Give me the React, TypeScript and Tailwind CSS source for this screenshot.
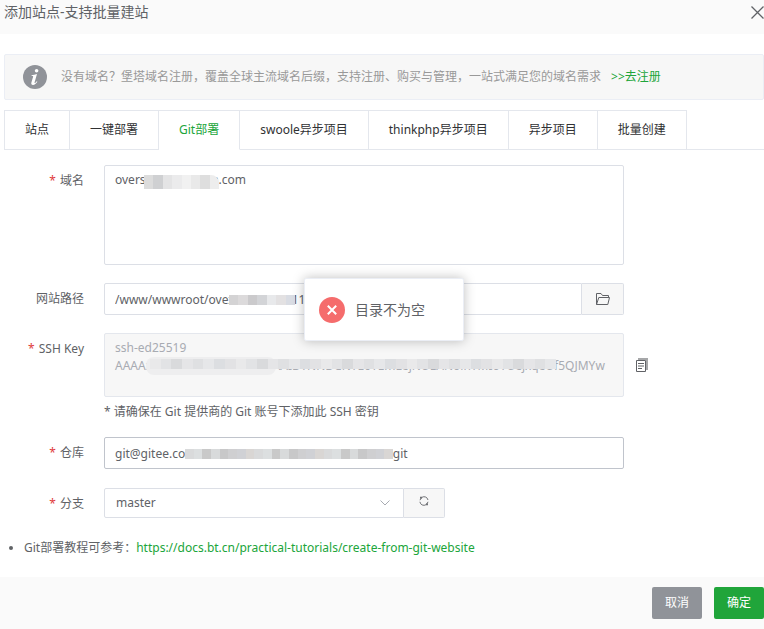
import React, { useState } from 'react';

const TABS = ['站点', '一键部署', 'Git部署', 'swoole异步项目', 'thinkphp异步项目', '异步项目', '批量创建'];

const inputBase =
  'block w-full rounded-xs border border-[#dcdfe6] bg-white px-2.5 text-xs text-[#606266] outline-none focus:border-[#20a53a]';

// Shades of the mosaic that hides private values
const DOMAIN_MASK = ['bg-[#dcdcdc]', 'bg-[#cfd0d2]', 'bg-[#e4e4e5]', 'bg-[#ebebec]', 'bg-[#f1f1f1]', 'bg-[#e9e9e9]', 'bg-[#dedede]', 'bg-[#ededed]'];
const PATH_MASK = ['bg-[#d4d3d4]', 'bg-[#dcdadb]', 'bg-[#cbcacc]', 'bg-[#d3d4d7]', 'bg-[#e8e9eb]', 'bg-[#e3e1e2]', 'bg-[#d9dce3]'];
const KEY_MASK = ['bg-[#e9e9ea]', 'bg-[#e2e3e5]', 'bg-[#d9dadc]', 'bg-[#e5e5e7]', 'bg-[#dfe0e2]', 'bg-[#e6e7e9]', 'bg-[#dcdee1]', 'bg-[#e2e2e4]'];
const REPO_MASK = ['bg-[#d9dadb]', 'bg-[#dcdfe0]', 'bg-[#c9c9c9]', 'bg-[#d8dadb]', 'bg-[#c8c8c9]', 'bg-[#cfcfd1]', 'bg-[#d0d1d5]', 'bg-[#d9d6d4]'];

const Mask: React.FC<{ cells: string[]; className: string }> = ({ cells, className }) => (
  <div aria-hidden="true" className={`absolute flex overflow-hidden ${className}`}>
    {cells.map((cell, i) => (
      <span key={i} className={`flex-1 ${cell}`} />
    ))}
  </div>
);

const FormRow: React.FC<{
  id: string;
  label: string;
  required?: boolean;
  children: React.ReactNode;
}> = ({ id, label, required, children }) => (
  <div className="flex gap-5">
    <label htmlFor={id} className="w-20 shrink-0 text-right leading-8">
      {required && <span className="mr-1 text-[#e03c3c]">*</span>}
      {label}
    </label>
    {children}
  </div>
);

const InfoIcon = () => (
  <svg viewBox="0 0 24 24" className="size-6 shrink-0">
    <circle cx="12" cy="12" r="12" fill="#909399" />
    <circle cx="13.6" cy="5.8" r="1.8" fill="#fff" />
    <path d="M8.6 10.2c1.8-.2 3.4-.7 5.4-1.3l-2.4 8.3c-.2.8.1 1 .6.7.5-.3 1-.9 1.5-1.6l.7.5c-1.3 2-2.8 3.2-4.4 3.2-1.5 0-2-1-1.6-2.5l1.7-5.7c.2-.7 0-.9-.6-.9h-1z" fill="#fff" />
  </svg>
);

const FolderIcon = () => (
  <svg viewBox="0 0 14 12" className="h-3 w-3.5" fill="none" stroke="#606266">
    <path d="M.5 11.5V.5h4.5l1.5 2h6v2M.5 11.5l2.3-7h10.7l-1.7 7z" />
  </svg>
);

const CopyIcon = () => (
  <svg viewBox="0 0 12 14" className="h-3.5 w-3" fill="none">
    <path d="M2 1h9v11" stroke="#a6a7a9" strokeWidth="2" />
    <path d="M.5 2.5h9v11h-9z" fill="#fff" stroke="#606266" />
    <path d="M2 5.5h6M2 8h6M2 10.5h4" stroke="#606266" />
  </svg>
);

const RefreshIcon = () => (
  <svg viewBox="0 0 10 10" className="size-2.5" fill="none" stroke="#707276">
    <path d="M3 1.3A4 4 0 0 1 9 4M.9 5.8A4 4 0 0 0 7 8.7M1 4.2l.8-1.7M9 5.8l-.8 1.7" />
    <path d="M1 .8h2v2H1zM7 7.2h2v2H7z" fill="#707276" stroke="none" />
  </svg>
);

const App: React.FC = () => {
  const [activeTab, setActiveTab] = useState('Git部署');
  const [domain, setDomain] = useState('oversxxxxxxx11nn.com');
  const [path, setPath] = useState('/www/wwwroot/ovexxxxxxxxxx11nn.com');
  const [repo, setRepo] = useState('git@gitee.connnnnnnnnnnnnnnnnnnnnnnnnnnngit');
  const sshKey = 'ssh-ed25519\nAAAAxxxxxxxxxxxxxxxxxxxxAAIDTNNDCNTE0TEmLejNUEANoinTMIoTUejxqeUf5QJMYw';

  return (
    <div className="relative bg-white font-['Noto_Sans','Noto_Sans_CJK_SC',sans-serif] text-xs text-[#606266]">
      <header className="flex h-[34px] items-start justify-between bg-[#fafafa] pl-1">
        <h1 className="text-sm leading-6">添加站点-支持批量建站</h1>
        <button type="button" aria-label="关闭" className="py-1.5">
          <svg viewBox="0 0 13 13" className="size-[13px]" fill="none" stroke="#606266" strokeWidth="1.3">
            <path d="M.5.5l12 12M12.5.5l-12 12" />
          </svg>
        </button>
      </header>

      <main className="pt-5 pl-1">
        <div className="flex h-[46px] items-center rounded-xs border border-[#ebeef5] bg-[#f7f7f7] pl-[18px] text-[#999]">
          <InfoIcon />
          <p className="ml-3.5">没有域名？堡塔域名注册，覆盖全球主流域名后缀，支持注册、购买与管理，一站式满足您的域名需求</p>
          <a href="#register" className="ml-2.5 text-[#20a53a]">&gt;&gt;去注册</a>
        </div>

        <div role="tablist" className="mt-2.5 flex h-10">
          {TABS.map((tab, i) => (
            <button
              key={tab}
              type="button"
              role="tab"
              aria-selected={activeTab === tab}
              onClick={() => setActiveTab(tab)}
              className={`shrink-0 border-y border-r border-[#e4e7ed] px-5 ${i === 0 ? 'border-l' : ''} ${
                activeTab === tab ? 'border-b-white text-[#20a53a]' : 'text-[#303133]'
              }`}
            >
              {tab}
            </button>
          ))}
          <div className="flex-1 border-b border-[#e4e7ed]" />
        </div>

        <form className="pt-[15px]" onSubmit={e => e.preventDefault()}>
          <FormRow id="domain" label="域名" required>
            <div className="relative w-full max-w-[520px]">
              <textarea
                id="domain"
                value={domain}
                onChange={e => setDomain(e.target.value)}
                className={`${inputBase} h-[100px] resize-none py-[5px] leading-[18px]`}
              />
              <Mask cells={DOMAIN_MASK} className="top-2.5 left-10 h-3.5 w-[75px] rounded-tr-lg" />
            </div>
          </FormRow>

          <div className="mt-[18px]">
            <FormRow id="path" label="网站路径">
              <div className="relative flex w-full max-w-[520px]">
                <input
                  id="path"
                  value={path}
                  onChange={e => setPath(e.target.value)}
                  className={`${inputBase} h-8 rounded-r-none`}
                />
                <Mask cells={PATH_MASK} className="top-3 left-[125px] h-2.5 w-[66px]" />
                <button
                  type="button"
                  aria-label="选择目录"
                  className="flex h-8 w-[42px] shrink-0 items-center justify-center rounded-r-xs border border-l-0 border-[#dcdfe6] bg-[#f7f7f7]"
                >
                  <FolderIcon />
                </button>
              </div>
            </FormRow>
          </div>

          <div className="mt-[18px]">
            <FormRow id="ssh-key" label="SSH Key" required>
              <div className="w-full max-w-[520px]">
                <div className="relative">
                  <textarea
                    id="ssh-key"
                    readOnly
                    value={sshKey}
                    className="block h-16 w-full resize-none overflow-hidden rounded-xs border border-[#e4e7ed] bg-[#f7f7f7] px-2.5 py-[5px] text-xs leading-[18px] text-[#a8abb2] outline-none"
                  />
                  <div aria-hidden="true" className="absolute top-6 left-[42px] h-[18px] w-[130px] rounded-lg bg-[#eeeeef]" />
                  <Mask cells={[...KEY_MASK, ...KEY_MASK, ...KEY_MASK, ...KEY_MASK, ...KEY_MASK.slice(0, 6)]} className="top-[26px] left-[46px] h-2.5 w-[406px]" />
                </div>
                <p className="mt-1.5 leading-[18px]">* 请确保在 Git 提供商的 Git 账号下添加此 SSH 密钥</p>
              </div>
              <button type="button" aria-label="复制" className="-ml-2 flex h-16 items-center">
                <CopyIcon />
              </button>
            </FormRow>
          </div>

          <div className="mt-4">
            <FormRow id="repo" label="仓库" required>
              <div className="relative w-full max-w-[520px]">
                <input
                  id="repo"
                  value={repo}
                  onChange={e => setRepo(e.target.value)}
                  className="block h-8 w-full rounded-xs border border-[#c0c4cc] bg-white px-2.5 text-xs text-[#606266] outline-none focus:border-[#20a53a]"
                />
                <Mask cells={[...REPO_MASK, ...REPO_MASK, ...REPO_MASK]} className="top-3 left-[81px] h-2.5 w-52" />
              </div>
            </FormRow>
          </div>

          <div className="mt-[19px]">
            <FormRow id="branch" label="分支" required>
              <div className="flex h-[30px] w-[341px]">
                <div className="relative flex-1">
                  <select
                    id="branch"
                    className="block h-full w-full appearance-none rounded-l-xs border border-[#dcdfe6] bg-white px-[11px] text-xs text-[#606266] outline-none"
                  >
                    <option>master</option>
                  </select>
                  <svg viewBox="0 0 10 6" className="pointer-events-none absolute top-3 right-3.5 h-1.5 w-2.5" fill="none" stroke="#a8abb2">
                    <path d="M.5.5L5 5 9.5.5" />
                  </svg>
                </div>
                <button
                  type="button"
                  aria-label="刷新"
                  className="flex w-[41px] items-center justify-center rounded-r-xs border border-l-0 border-[#dcdfe6] bg-[#f7f7f7] pb-1"
                >
                  <RefreshIcon />
                </button>
              </div>
            </FormRow>
          </div>
        </form>

        <ul className="mt-[19px] list-disc pb-5 pl-5 leading-[18px]">
          <li>
            Git部署教程可参考：
            <a href="https://docs.bt.cn/practical-tutorials/create-from-git-website" className="text-[#20a53a]">
              https://docs.bt.cn/practical-tutorials/create-from-git-website
            </a>
          </li>
        </ul>
      </main>

      <footer className="flex justify-end gap-3 bg-[#fafafa] py-2.5">
        <button type="button" className="h-8 w-[50px] rounded-xs bg-[#909399] text-white">取消</button>
        <button type="button" className="h-8 w-[50px] rounded-xs bg-[#20a53a] text-white">确定</button>
      </footer>

      {/* Error message */}
      <div className="pointer-events-none absolute inset-x-0 top-[278px] flex justify-center pl-1">
        <div role="alert" className="flex h-[63px] w-40 items-center gap-2.5 rounded-xs border border-[#ebeef5] bg-white pl-3.5 text-sm shadow-[0_0_12px_rgba(0,0,0,0.25)]">
          <svg viewBox="0 0 26 26" className="size-[26px]">
            <circle cx="13" cy="13" r="13" fill="#f56c6c" />
            <path d="M8.8 8.8l8.4 8.4M17.2 8.8l-8.4 8.4" stroke="#fff" strokeWidth="2" />
          </svg>
          目录不为空
        </div>
      </div>
    </div>
  );
};

export default App;
